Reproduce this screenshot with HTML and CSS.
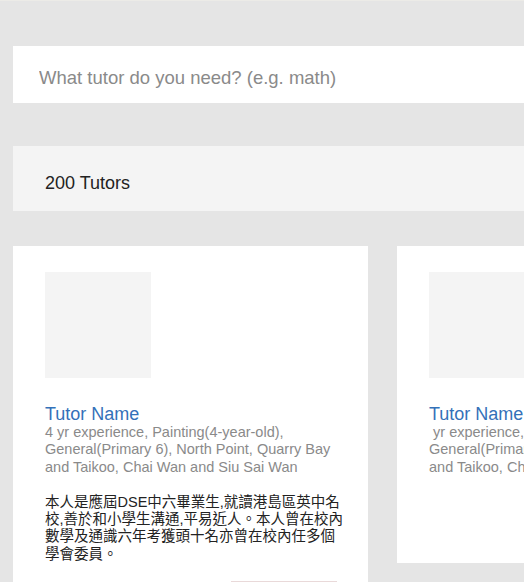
FILE: index.html
```html
<!DOCTYPE html>
<html lang="zh-Hant">
<head>
<meta charset="utf-8">
<title>Tutors</title>
<link rel="stylesheet" href="styles.css">
</head>
<body>
<div class="page">
  <input class="search" type="text" placeholder="What tutor do you need? (e.g. math)">
  <div class="count">200 Tutors</div>
  <div class="cards">
    <div class="card">
      <div class="photo"></div>
      <div class="name">Tutor Name</div>
      <div class="details">4 yr experience, Painting(4-year-old), General(Primary 6), North Point, Quarry Bay and Taikoo, Chai Wan and Siu Sai Wan</div>
      <p class="desc">本人是應屆DSE中六畢業生,就讀港島區英中名校,善於和小學生溝通,平易近人。本人曾在校內數學及通識六年考獲頭十名亦曾在校內任多個學會委員。</p>
      <div class="actions"><button class="btn" type="button"></button></div>
    </div>
    <div class="card">
      <div class="photo"></div>
      <div class="name">Tutor Name</div>
      <div class="details">&nbsp;yr experience, Painting(4-year-old), General(Primary 6), North Point, Quarry Bay and Taikoo, Chai Wan and Siu Sai Wan</div>
      <div class="actions"><button class="btn" type="button"></button></div>
    </div>
  </div>
</div>
</body>
</html>
```
FILE: styles.css
```css
html, body {
  margin: 0;
  padding: 0;
  overflow: hidden;
  height: 100%;
}
body {
  background: #e5e5e5;
  border-top: 1px solid #ecebe7;
  box-sizing: border-box;
  font-family: "Liberation Sans", Arial, "Noto Sans CJK TC", sans-serif;
}
.page {
  width: 760px;
  padding: 45px 0 0 13px;
  display: flex;
  flex-direction: column;
}
.search {
  display: block;
  box-sizing: border-box;
  width: 100%;
  height: 57px;
  border: none;
  outline: none;
  background: #ffffff;
  padding: 7px 0 0 26px;
  margin: 0;
  font-family: "Liberation Sans", Arial, sans-serif;
  font-size: 18.5px;
  color: #333;
}
.search::placeholder {
  color: #8a8a8a;
  opacity: 1;
}
.count {
  margin-top: 43px;
  box-sizing: border-box;
  height: 65px;
  background: #f4f4f4;
  padding: 27px 0 0 32px;
  font-size: 18px;
  line-height: 20px;
  color: #222;
}
.cards {
  margin-top: 35px;
  display: flex;
  align-items: flex-start;
  gap: 29px;
}
.card {
  width: 355px;
  flex: none;
  box-sizing: border-box;
  background: #fff;
  padding: 26px 24px 26px 32px;
}
.photo {
  width: 106px;
  height: 106px;
  background: #f4f4f4;
}
.name {
  margin-top: 26px;
  font-size: 18px;
  line-height: 20px;
  color: #3471b9;
}
.details {
  font-size: 14.5px;
  line-height: 17.3px;
  color: #8a8a8a;
}
.desc {
  margin: 18px 0 0;
  font-family: "Liberation Sans", Arial, "Noto Sans CJK TC", sans-serif;
  font-size: 14.5px;
  line-height: 17.2px;
  color: #222;
}
.actions {
  margin-top: 18px;
  padding-right: 7px;
  display: flex;
  justify-content: flex-end;
}
.btn {
  width: 106px;
  height: 43px;
  margin: 0;
  padding: 0;
  background: #fff;
  border: 1px solid #e9d9d9;
  border-radius: 0;
}
```
